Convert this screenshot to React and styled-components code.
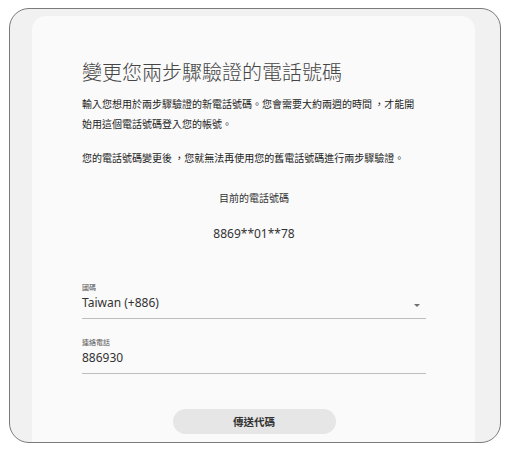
import React from 'react';
import styled, { createGlobalStyle } from 'styled-components';

const GlobalStyle = createGlobalStyle`
    html, body {
        margin: 0;
        padding: 0;
        background: #ffffff;
    }
    body {
        font-family: "Noto Sans", "Noto Sans CJK TC", sans-serif;
        color: #222;
    }
`;

const Frame = styled.div`
    box-sizing: border-box;
    width: 492px;
    height: 435px;
    margin: 8px 0 0 9px;
    padding: 7px 25px 0 22px;
    border: 1px solid #7a7a7a;
    border-radius: 20px;
    background: #f1f1f1;
    overflow: hidden;
`;

const Card = styled.div`
    box-sizing: border-box;
    height: 100%;
    padding: 42px 49px 0 50px;
    background: #fafafa;
    border-radius: 14px 14px 0 0;
    display: flex;
    flex-direction: column;
`;

const Heading = styled.h1`
    margin: 0 0 8px;
    font-family: "Noto Sans CJK TC", sans-serif;
    font-size: 20px;
    line-height: 28px;
    font-weight: 300;
    color: #454545;
`;

const Paragraph = styled.p`
    max-width: 336px;
    margin: 0 0 ${(p) => p.$gap || 0}px;
    font-family: "Noto Sans CJK TC", sans-serif;
    font-size: 10px;
    line-height: 20px;
    color: #222;
`;

const Centered = styled.div`
    text-align: center;
    font-family: "Noto Sans", "Noto Sans CJK TC", sans-serif;
    font-size: ${(p) => p.$size}px;
    line-height: 20px;
    color: #333;
    margin-bottom: ${(p) => p.$gap || 0}px;
`;

const Field = styled.div`
    position: relative;
    border-bottom: 1px solid #bdbdbd;
    padding-bottom: 6px;
    margin-bottom: ${(p) => p.$gap || 0}px;
`;

const Label = styled.div`
    font-family: "Noto Sans CJK TC", sans-serif;
    font-size: 7px;
    line-height: 10px;
    color: #555;
    margin-bottom: 2px;
`;

const Value = styled.div`
    font-family: "Noto Sans", "Noto Sans CJK TC", sans-serif;
    font-size: 12px;
    line-height: 18px;
    color: #333;
`;

const Caret = styled.span`
    position: absolute;
    right: 6px;
    bottom: 11px;
    width: 0;
    height: 0;
    border-left: 3px solid transparent;
    border-right: 3px solid transparent;
    border-top: 3px solid #6f6f6f;
`;

const Button = styled.button`
    align-self: center;
    width: 163px;
    height: 25px;
    border: none;
    border-radius: 13px;
    background: #e6e6e6;
    font-family: "Noto Sans CJK TC", sans-serif;
    font-size: 10.5px;
    font-weight: 700;
    color: #333;
    cursor: pointer;
`;

function App() {
    return (
        <>
            <GlobalStyle />
            <Frame>
                <Card lang="zh-Hant-TW">
                    <Heading>變更您兩步驟驗證的電話號碼</Heading>
                    <Paragraph $gap={14}>
                        輸入您想用於兩步驟驗證的新電話號碼。您會需要大約兩週的時間 ，才能開始用這個電話號碼登入您的帳號。
                    </Paragraph>
                    <Paragraph $gap={20}>
                        您的電話號碼變更後 ，您就無法再使用您的舊電話號碼進行兩步驟驗證。
                    </Paragraph>
                    <Centered $size={10} $gap={16}>目前的電話號碼</Centered>
                    <Centered $size={12} $gap={38}>8869**01**78</Centered>
                    <Field $gap={18}>
                        <Label>國碼</Label>
                        <Value>Taiwan (+886)</Value>
                        <Caret />
                    </Field>
                    <Field $gap={35}>
                        <Label>連絡電話</Label>
                        <Value>886930</Value>
                    </Field>
                    <Button>傳送代碼</Button>
                </Card>
            </Frame>
        </>
    );
}

export default App;
